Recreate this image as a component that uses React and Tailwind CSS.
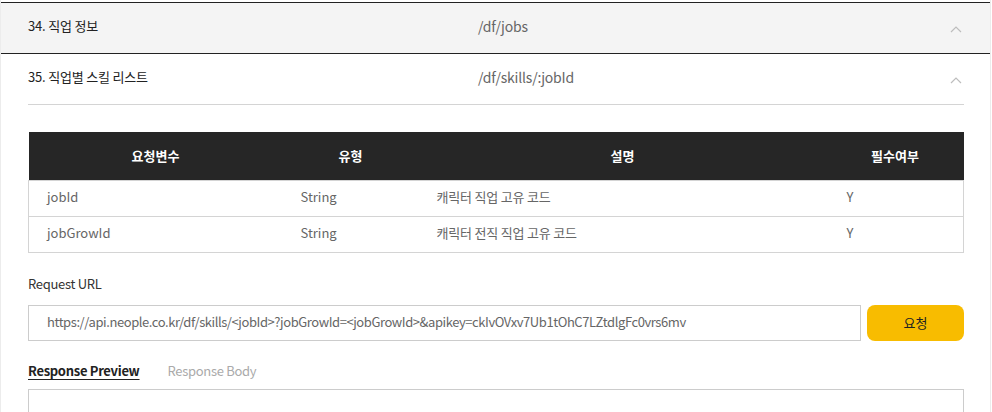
import React from "react";

const params = [
  { name: "jobId", type: "String", desc: "캐릭터 직업 고유 코드", req: "Y" },
  { name: "jobGrowId", type: "String", desc: "캐릭터 전직 직업 고유 코드", req: "Y" },
];

const Chevron = () => (
  <svg width="12" height="8" viewBox="0 0 12 8" fill="none" stroke="#bdbdbd" strokeWidth="1.2">
    <path d="M1 7 L6 2 L11 7" />
  </svg>
);

const ApiRow = ({ title, path, shaded }) => (
  <div className={`flex items-center h-[50px] pl-[27px] pr-[26px] pb-[4px] ${shaded ? "bg-[#f4f4f4]" : "bg-white"}`}>
    <div className="w-[450px] text-[13px] text-[#222] tracking-[-0.2px]">{title}</div>
    <div className="flex-1 text-[14px] text-[#666] tracking-[-0.2px]">{path}</div>
    <div className="w-[16px] flex justify-center pt-[6px]">
      <Chevron />
    </div>
  </div>
);

export default function App() {
  return (
    <div className="w-[991px] h-[412px] overflow-hidden bg-white border-x border-[#ececec] pt-[2px] font-['Noto_Sans_CJK_KR','Noto_Sans',sans-serif]">
      <div className="border-t border-[#222]">
        <ApiRow title="34. 직업 정보" path="/df/jobs" shaded />
      </div>
      <div className="border-t border-[#222]">
        <ApiRow title="35. 직업별 스킬 리스트" path="/df/skills/:jobId" />
        <div className="pl-[27px] pr-[26px]">
          <div className="border-t border-[#d4d4d4]" />

          <table className="w-full mt-[27px] border-collapse text-[13px]">
            <thead>
              <tr className="bg-[#262626] text-white h-[48px]">
                <th className="w-[254px] font-bold">요청변수</th>
                <th className="w-[136px] font-bold">유형</th>
                <th className="w-[408px] font-bold">설명</th>
                <th className="font-bold">필수여부</th>
              </tr>
            </thead>
            <tbody className="text-[#666]">
              {params.map((p) => (
                <tr key={p.name} className="h-[36px] border border-[#d4d4d4]">
                  <td className="pl-[18px] pb-[2px]">{p.name}</td>
                  <td className="pl-[18px] pb-[2px]">{p.type}</td>
                  <td className="pl-[18px] pb-[2px] tracking-[-0.2px]">{p.desc}</td>
                  <td className="pl-[20px] pb-[2px]">{p.req}</td>
                </tr>
              ))}
            </tbody>
          </table>

          <div className="mt-[21px] text-[13px] text-[#333] tracking-[-0.3px]">Request URL</div>
          <div className="flex gap-[6px] mt-[12px]">
            <div className="flex-1 h-[36px] border border-[#cccccc] flex items-center pl-[18px] pb-[2px] text-[13px] text-[#666] tracking-[-0.43px]">
              https://api.neople.co.kr/df/skills/&lt;jobId&gt;?jobGrowId=&lt;jobGrowId&gt;&amp;apikey=ckIvOVxv7Ub1tOhC7LZtdlgFc0vrs6mv
            </div>
            <button className="w-[97px] h-[36px] rounded-[8px] bg-[#f8bc00] text-[13px] text-[#222]">요청</button>
          </div>

          <div className="flex gap-[28px] mt-[20px] text-[13px] tracking-[-0.3px]">
            <span className="font-bold text-[#222] underline underline-offset-[3px]">Response Preview</span>
            <span className="text-[#aaa]">Response Body</span>
          </div>
          <div className="mt-[8px] h-[60px] border border-[#cccccc]" />
        </div>
      </div>
    </div>
  );
}
